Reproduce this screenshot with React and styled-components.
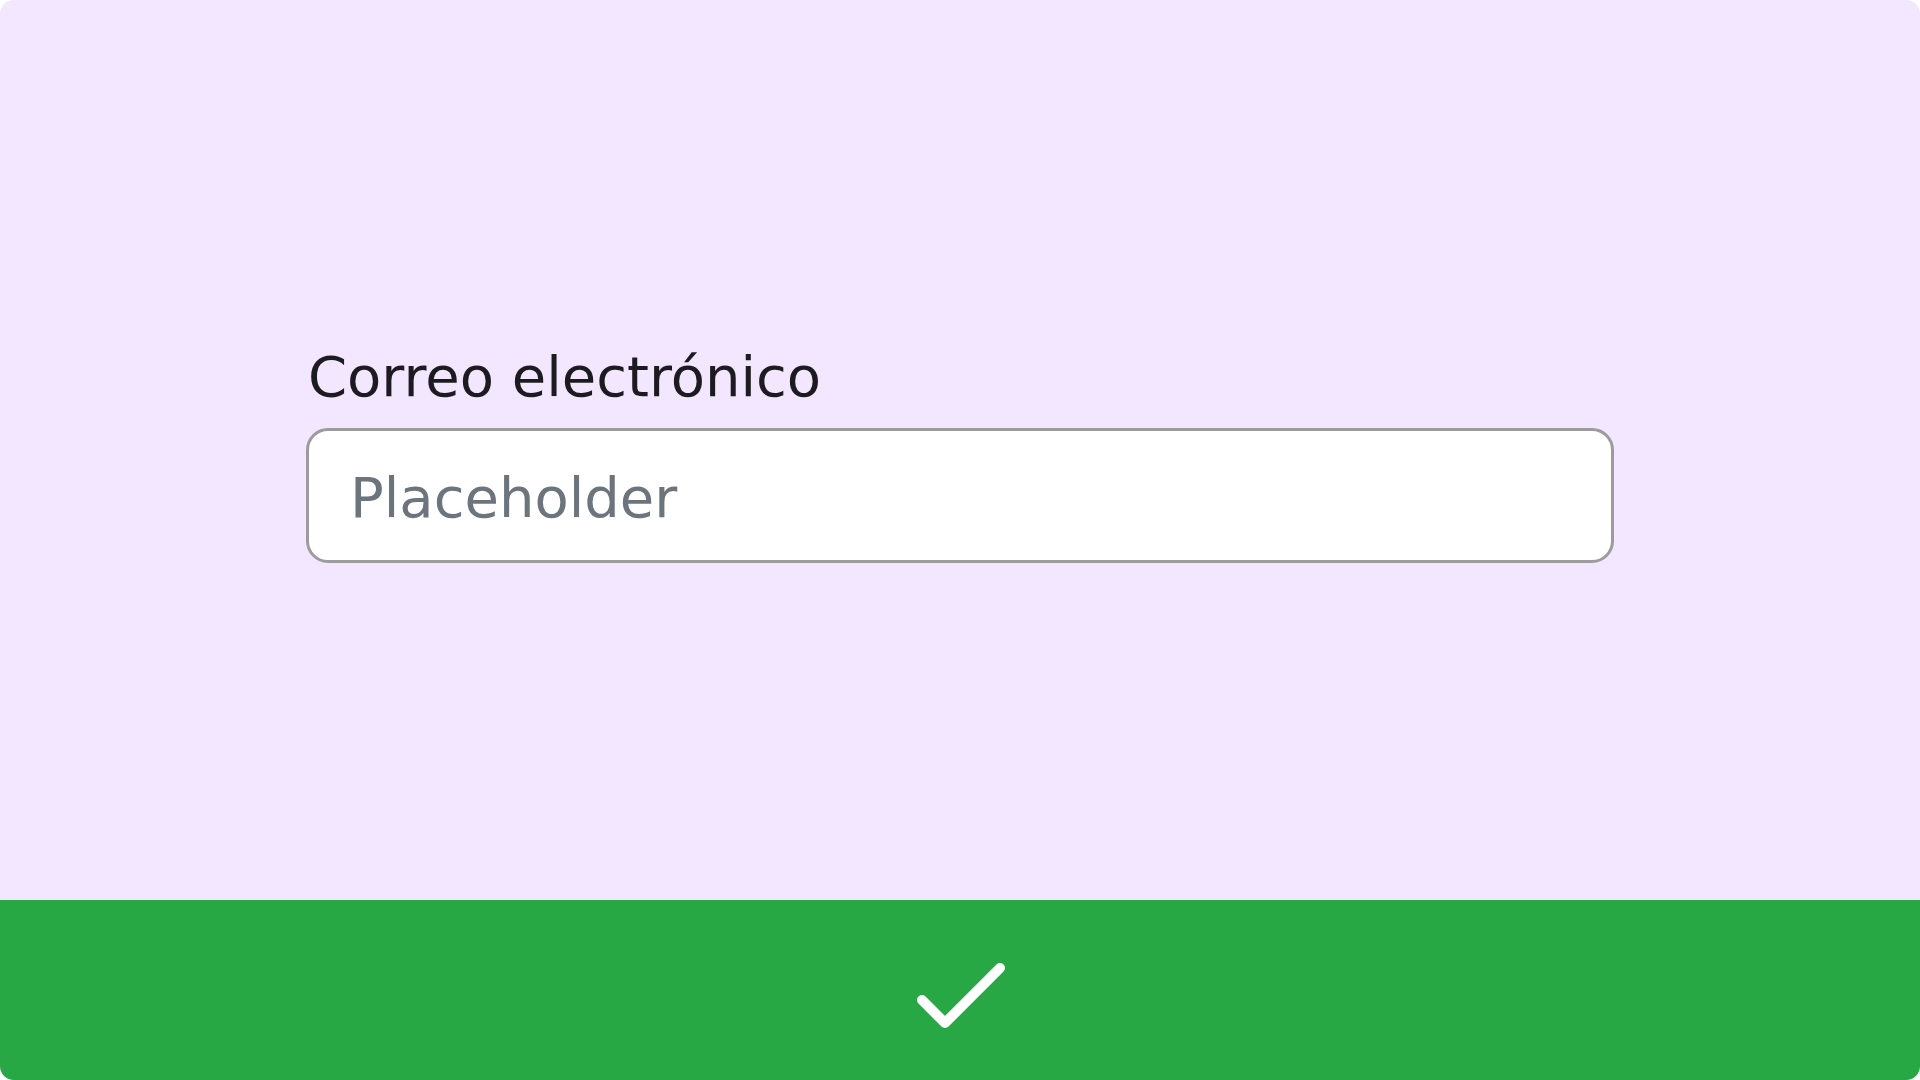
import React from 'react';
import styled, { createGlobalStyle } from 'styled-components';

const GlobalStyle = createGlobalStyle`
    html, body {
        margin: 0;
        padding: 0;
        background: #ffffff;
    }
    * {
        box-sizing: border-box;
    }
`;

function App(){

    return (
        <>
            <GlobalStyle/>

            <Screen>

                <Body>

                    <Field>
                        <Label htmlFor='email'>Correo electrónico</Label>
                        <Input id='email' type='email' placeholder='Placeholder'/>
                    </Field>

                </Body>

                <ConfirmBar type='button' aria-label='Confirmar'>
                    <svg width='100' height='80' viewBox='0 0 100 80' fill='none'>
                        <polyline
                            points='11,50 34,73 89,18'
                            stroke='#ffffff'
                            strokeWidth='10'
                            strokeLinecap='round'
                            strokeLinejoin='round'
                        />
                    </svg>
                </ConfirmBar>

            </Screen>
        </>
    )
}

const Screen = styled.div`
    width: 1920px;
    height: 1080px;
    display: flex;
    flex-direction: column;
    border-radius: 14px;
    overflow: hidden;
    background: #f3e6ff;
`;

const Body = styled.main`
    flex: 1;
    display: flex;
    align-items: center;
    justify-content: center;
    padding-top: 4px;
`;

const Field = styled.div`
    width: 1308px;
    display: flex;
    flex-direction: column;
    gap: 18px;
`;

const Label = styled.label`
    font-family: "DejaVu Sans", "Open Sans", sans-serif;
    font-size: 56px;
    line-height: 66px;
    margin-top: 2px;
    color: #1c1b1f;
    padding-left: 2px;
`;

const Input = styled.input`
    height: 135px;
    width: 100%;
    border: 3px solid #9c9c9c;
    border-radius: 22px;
    background: #ffffff;
    padding: 4px 40px 0 41px;
    font-family: "DejaVu Sans", "Open Sans", sans-serif;
    font-size: 56px;
    color: #1c1b1f;
    outline: none;

    &::placeholder {
        color: #6c757d;
        opacity: 1;
    }
`;

const ConfirmBar = styled.button`
    height: 180px;
    flex-shrink: 0;
    border: none;
    padding: 0 0 0 2px;
    background: #28a745;
    display: flex;
    align-items: center;
    justify-content: center;
    cursor: pointer;
`;

export default App;
